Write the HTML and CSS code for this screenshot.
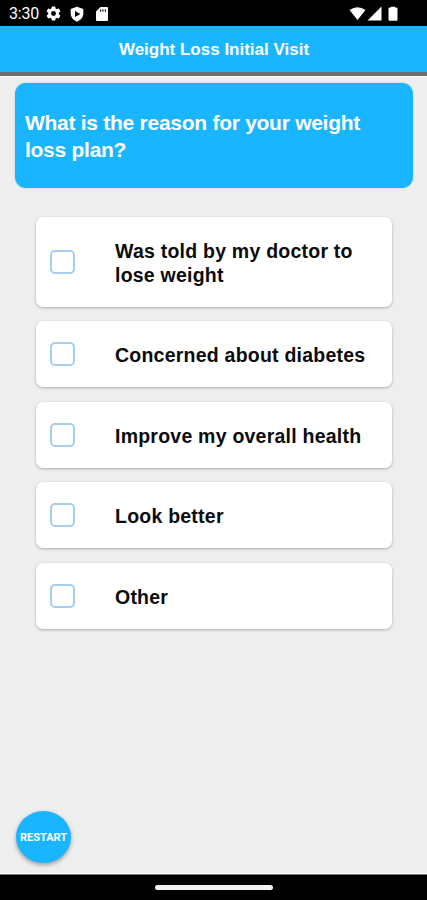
FILE: index.html
```html
<!DOCTYPE html>
<html lang="en">
<head>
<meta charset="utf-8">
<title>Weight Loss Initial Visit</title>
<link rel="stylesheet" href="styles.css">
</head>
<body>
<div class="status">
  <span class="time">3:30</span>
  <svg class="gear" width="17" height="17" viewBox="0 0 24 24"><path fill="#fff" fill-rule="evenodd" d="M19.4 13a7.500 7.500 0 0 0 0-2l2.200-1.700a.5.5 0 0 0 .1-.6l-2-3.500a.5.5 0 0 0-.6-.2l-2.500 1a7.300 7.300 0 0 0-1.700-1L14.500 2.400a.5.5 0 0 0-.5-.4h-4a.5.5 0 0 0-.5.4L9.100 5a7.700 7.700 0 0 0-1.700 1l-2.500-1a.5.5 0 0 0-.6.200l-2 3.500a.5.500 0 0 0 .1.600L4.600 11a7.500 7.500 0 0 0 0 2l-2.200 1.700a.5.5 0 0 0-.1.600l2 3.500c.1.200.4.300.6.200l2.500-1a7.300 7.300 0 0 0 1.700 1l.4 2.600c0 .2.200.4.500.4h4c.3 0 .5-.2.500-.4l.4-2.600a7.700 7.700 0 0 0 1.700-1l2.500 1c.2.100.5 0 .6-.2l2-3.500a.5.5 0 0 0-.1-.6zM12 15.500a3.500 3.500 0 1 1 0-7 3.500 3.500 0 0 1 0 7z"/></svg>
  <svg class="shield" width="16" height="16" viewBox="0 0 24 24"><path fill="#fff" fill-rule="evenodd" d="M12 1 2.500 4.500V11c0 6 4 10.500 9.500 12.500C17.500 21.500 21.500 17 21.500 11V4.500zM9 7.500l8 4.500-8 4.500z"/></svg>
  <svg class="card" width="14" height="16" viewBox="0 0 14 16"><path fill="#fff" fill-rule="evenodd" d="M5.500 1H12q1 0 1 1v12q0 1-1 1H2q-1 0-1-1V5.500zM5 3.500V5.500h1.200V3.500zm2.400 0V5.500h1.200V3.500zm2.400 0V5.500H11V3.500z"/></svg>
  <svg class="signals" width="50" height="16" viewBox="0 0 50 16"><path fill="#fff" d="M.5 4Q8.500-1.700 16.500 4L8.500 14zM32.500.5V14.500H18.500zM42 1.500V.7h4v.8h1.500q1 0 1 1v11.200q0 1-1 1h-7q-1 0-1-1V2.500q0-1 1-1z"/></svg>
</div>
<header class="bar"><h1>Weight Loss Initial Visit</h1></header>
<main class="content">
  <h2 class="question">What is the reason for your weight loss plan?</h2>
  <div class="options">
    <label class="option tall"><span class="box"></span><span class="text">Was told by my doctor to lose weight</span></label>
    <label class="option"><span class="box"></span><span class="text">Concerned about diabetes</span></label>
    <label class="option"><span class="box"></span><span class="text">Improve my overall health</span></label>
    <label class="option"><span class="box"></span><span class="text">Look better</span></label>
    <label class="option"><span class="box"></span><span class="text">Other</span></label>
  </div>
  <button class="restart">RESTART</button>
</main>
<footer class="nav"><span class="handle"></span></footer>
</body>
</html>
```
FILE: styles.css
```css
* { box-sizing: border-box; }
body {
  margin: 0;
  width: 427px;
  height: 900px;
  display: flex;
  flex-direction: column;
  overflow: hidden;
  background: #eee;
  font-family: "Liberation Sans", Arial, sans-serif;
}
.status {
  height: 26px;
  flex: none;
  display: flex;
  align-items: center;
  padding: 1px 28px 0 9px;
  background: #000;
  color: #fff;
}
.time { width: 36px; font: 16px/20px Roboto, sans-serif; letter-spacing: -0.2px; }
.shield { margin-left: 7px; }
.card { margin-left: 10px; }
.signals { margin-left: auto; }
.bar {
  height: 50px;
  flex: none;
  display: flex;
  align-items: center;
  justify-content: center;
  padding: 2px 0 0 1px;
  background: #1ab5ff;
  border-bottom: 4px solid #6e6e6e;
  box-shadow: 0 1px 0 #fff;
}
h1 {
  margin: 0;
  font-size: 17px;
  line-height: 20px;
  color: #fff;
}
.content {
  flex: 1;
  display: flex;
  flex-direction: column;
  align-items: flex-start;
  padding: 7px 14px 11px 15px;
}
.question {
  margin: 0;
  width: 398px;
  height: 105px;
  padding: 26px 10px;
  border-radius: 11px;
  background: #1ab5ff;
  color: #fff;
  font-size: 21px;
  line-height: 27px;
  letter-spacing: -0.27px;
  box-shadow: 0 0 2px rgba(0, 0, 0, 0.2);
}
.options {
  display: flex;
  flex-direction: column;
  gap: 14.5px;
  margin: 29px 0 0 21px;
}
.option {
  width: 356px;
  height: 66px;
  display: flex;
  align-items: center;
  padding: 0 14px;
  border-radius: 7px;
  background: #fff;
  box-shadow: 0 1px 3px rgba(0, 0, 0, 0.28);
}
.tall { height: 89.5px; }
.box {
  width: 25px;
  height: 24px;
  flex: none;
  border: 2px solid #a5cef2;
  border-radius: 5px;
}
.text {
  margin: 2px 0 0 40px;
  width: 265px;
  font-size: 19.5px;
  font-weight: bold;
  line-height: 24px;
  letter-spacing: 0.23px;
  color: #0b0b0b;
}
.restart {
  width: 55px;
  height: 52px;
  margin: auto 0 0 1px;
  padding: 0;
  border: 0;
  border-radius: 50%;
  background: #1ab5ff;
  color: #fff;
  font: bold 11px Roboto, sans-serif;
  box-shadow: 0 2px 4px rgba(0, 0, 0, 0.35);
}
.nav {
  height: 26px;
  flex: none;
  display: flex;
  justify-content: center;
  padding-top: 10px;
  background: #000;
  border-top: 1px solid #777;
  box-shadow: 0 -1px 0 #fff;
}
.handle { width: 118px; height: 5px; border-radius: 3px; background: #f2f2f2; }
```
